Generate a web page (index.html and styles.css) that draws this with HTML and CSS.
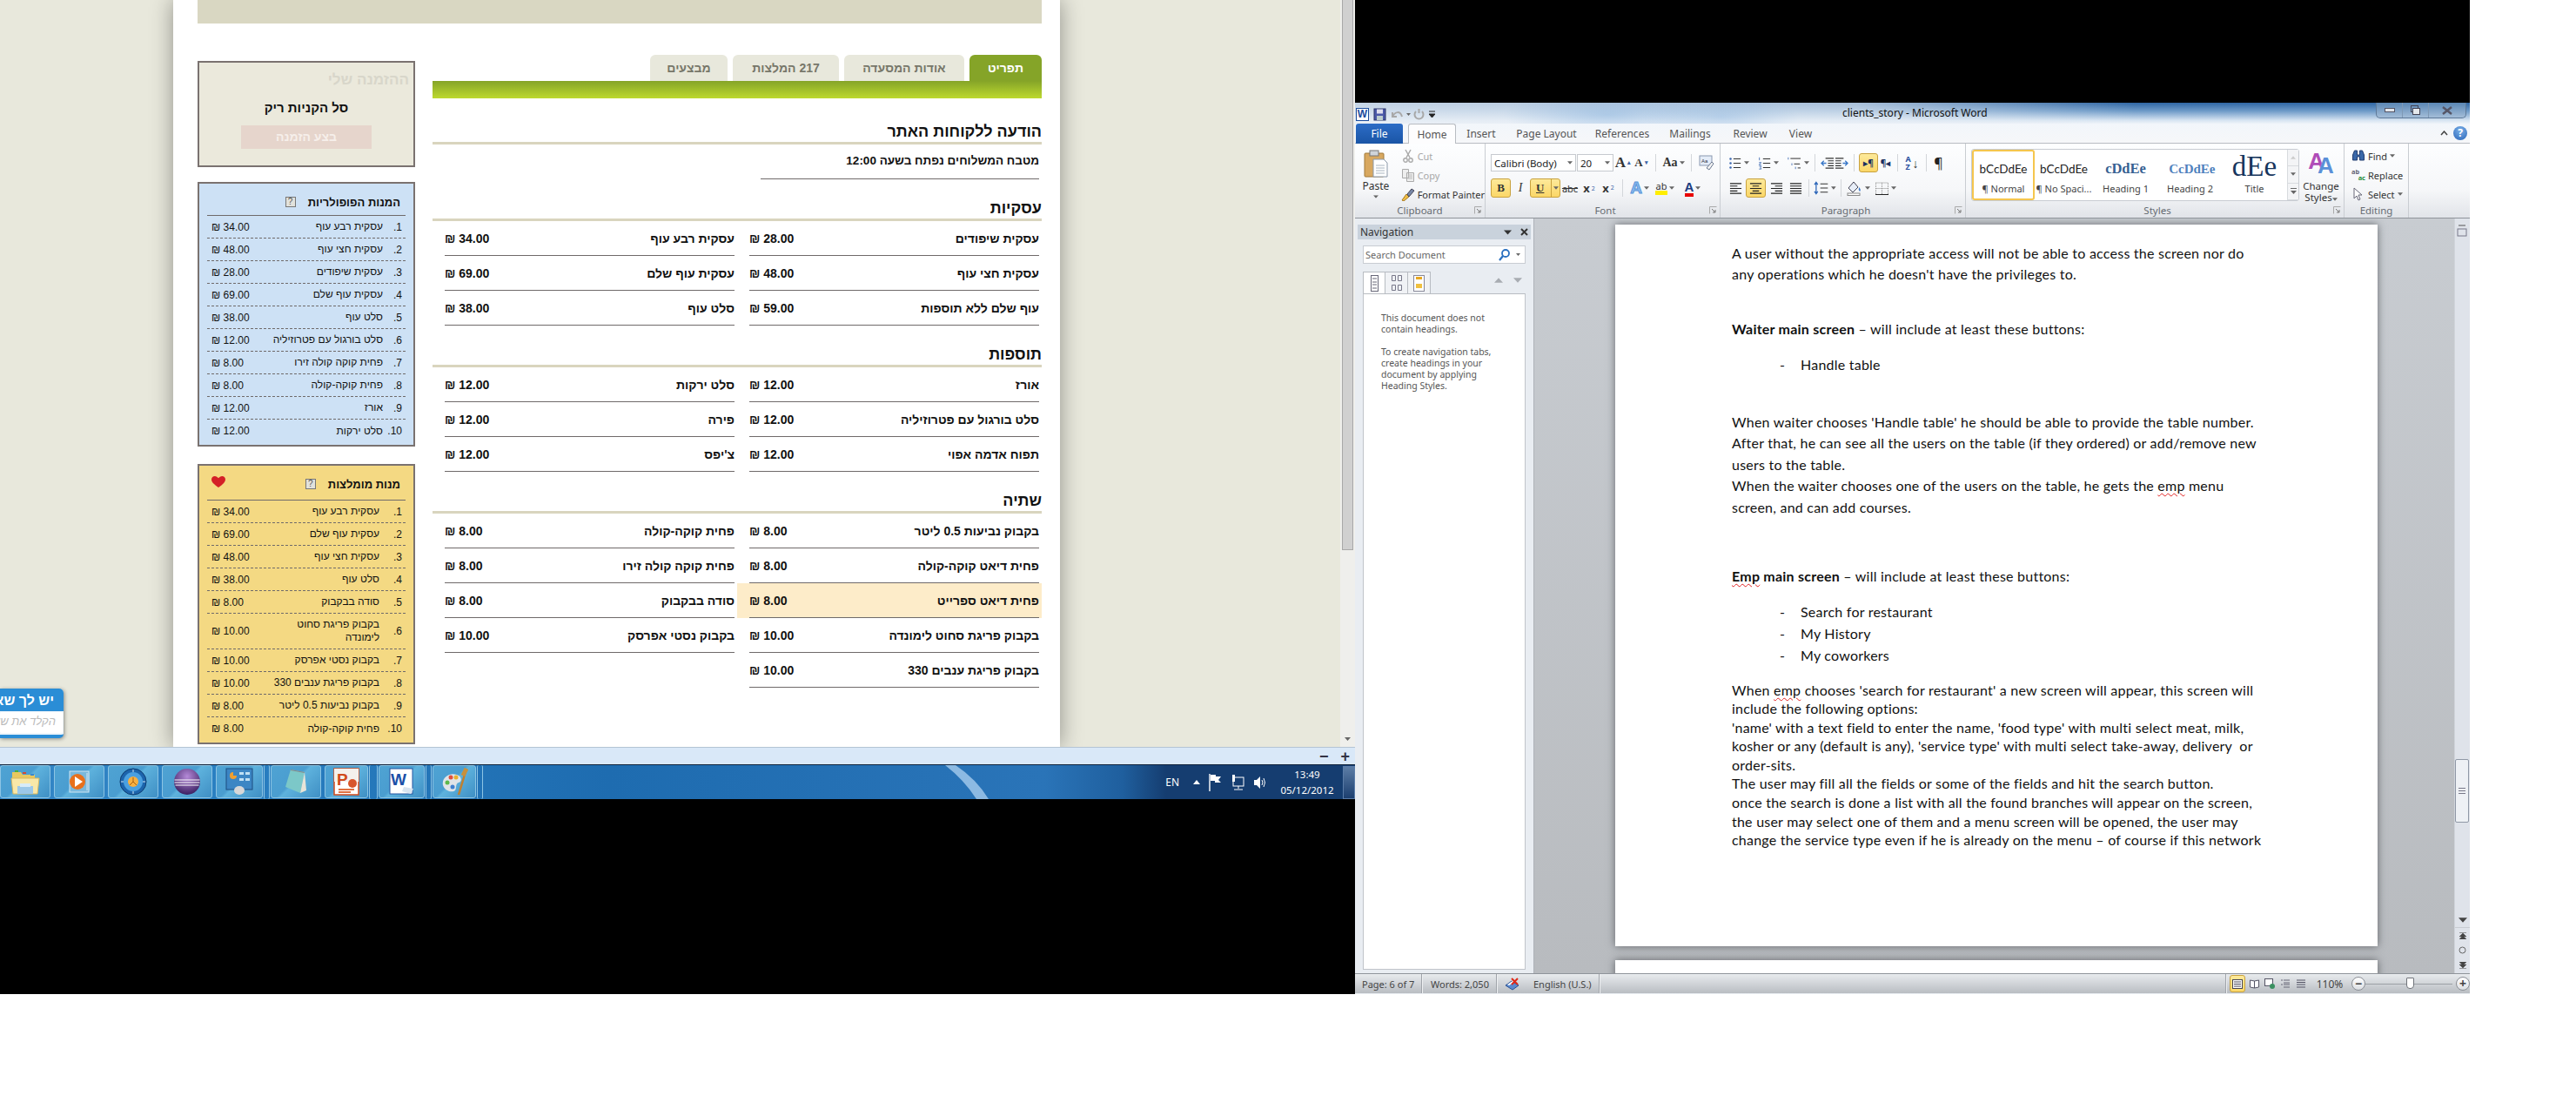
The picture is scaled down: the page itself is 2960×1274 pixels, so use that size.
FILE: index.html
```html
<!DOCTYPE html>
<html lang="en">
<head>
  <meta charset="UTF-8">
  <title>clients_story - Microsoft Word</title>
  <link rel="stylesheet" href="styles.css">
</head>
<body>
  <svg class="icon-defs" width="0" height="0">
    <defs>
      <symbol id="i-bullets" viewBox="0 0 18 18"><g fill="#3a66b0"><circle cx="3" cy="3" r="1.5"/><circle cx="3" cy="9" r="1.5"/><circle cx="3" cy="15" r="1.5"/></g><path d="M7 3h10M7 9h10M7 15h10" stroke="#333" stroke-width="1.2"/></symbol>
      <symbol id="i-numbers" viewBox="0 0 18 18"><path d="M2 1v4M1.500 8h3l-3 3h3M1.500 13h3l-1 2 1 2h-3" stroke="#3a66b0" fill="none"/><path d="M7 3h10M7 9h10M7 15h10" stroke="#333" stroke-width="1.2"/></symbol>
      <symbol id="i-multi" viewBox="0 0 20 18"><path d="M2 1v3M7 9v3M12 14v3" stroke="#3a66b0"/><path d="M5 2.500h14M10 10h8M15 15.500h4" stroke="#333" stroke-width="1.2"/></symbol>
      <symbol id="i-dedent" viewBox="0 0 16 16"><path d="M6 2h10M9 5h7M9 8h7M9 11h7M6 14h10" stroke="#333" stroke-width="1.2"/><path d="M7 8H1m3-3L1 8l3 3" stroke="#3a78c8" stroke-width="1.4" fill="none"/></symbol>
      <symbol id="i-indent" viewBox="0 0 16 16"><path d="M0 2h10M0 5h7M0 8h7M0 11h7M0 14h10" stroke="#333" stroke-width="1.2"/><path d="M9 8h6m-3-3 3 3-3 3" stroke="#3a78c8" stroke-width="1.4" fill="none"/></symbol>
      <symbol id="i-left" viewBox="0 0 16 16"><path d="M1 2h14M1 5h9M1 8h14M1 11h9M1 14h14" stroke="#222" stroke-width="1.200"/></symbol>
      <symbol id="i-center" viewBox="0 0 16 16"><path d="M1 2h14M4 5h8M1 8h14M4 11h8M1 14h14" stroke="#222" stroke-width="1.200"/></symbol>
      <symbol id="i-right" viewBox="0 0 16 16"><path d="M1 2h14M6 5h9M1 8h14M6 11h9M1 14h14" stroke="#222" stroke-width="1.200"/></symbol>
      <symbol id="i-justify" viewBox="0 0 16 16"><path d="M1 2h14M1 5h14M1 8h14M1 11h14M1 14h14" stroke="#222" stroke-width="1.200"/></symbol>
      <symbol id="i-arrow" viewBox="0 0 7 4"><path d="M0 0h7L3.500 4z" fill="#666"/></symbol>
      <symbol id="i-launcher" viewBox="0 0 9 9"><path d="M.5 8.500v-8h8" stroke="#aaa" fill="none"/><path d="M3 3l4 4M7 4v3H4" stroke="#777" fill="none"/></symbol>
    </defs>
  </svg>

  <div class="screen">
    <section class="browser">
      <div class="viewport">
        <div class="site">
          <div class="site-page" dir="rtl" lang="he">
            <div class="site-header"></div>
            <div class="site-body">
              <main class="menu">
                <nav class="tabs">
                  <a class="tab tab-active">תפריט</a>
                  <a class="tab tab-about">אודות המסעדה</a>
                  <a class="tab tab-reviews">217 המלצות</a>
                  <a class="tab tab-deals">מבצעים</a>
                </nav>
                <div class="tabs-bar"></div>

                <h2 class="menu-title menu-title-first">הודעה ללקוחות האתר</h2>
                <p class="notice">מטבח המשלוחים נפתח בשעה 12:00</p>

                <h2 class="menu-title">עסקיות</h2>
                <div class="dishes">
                  <div class="dish"><div class="dish-line"><span>עסקית שיפודים</span><b>28.00 ₪</b></div></div>
                  <div class="dish"><div class="dish-line"><span>עסקית רבע עוף</span><b>34.00 ₪</b></div></div>
                  <div class="dish"><div class="dish-line"><span>עסקית חצי עוף</span><b>48.00 ₪</b></div></div>
                  <div class="dish"><div class="dish-line"><span>עסקית עוף שלם</span><b>69.00 ₪</b></div></div>
                  <div class="dish"><div class="dish-line"><span>עוף שלם ללא תוספות</span><b>59.00 ₪</b></div></div>
                  <div class="dish"><div class="dish-line"><span>סלט עוף</span><b>38.00 ₪</b></div></div>
                </div>

                <h2 class="menu-title">תוספות</h2>
                <div class="dishes">
                  <div class="dish"><div class="dish-line"><span>אורז</span><b>12.00 ₪</b></div></div>
                  <div class="dish"><div class="dish-line"><span>סלט ירקות</span><b>12.00 ₪</b></div></div>
                  <div class="dish"><div class="dish-line"><span>סלט בורגול עם פטרוזיליה</span><b>12.00 ₪</b></div></div>
                  <div class="dish"><div class="dish-line"><span>פירה</span><b>12.00 ₪</b></div></div>
                  <div class="dish"><div class="dish-line"><span>תפוח אדמה אפוי</span><b>12.00 ₪</b></div></div>
                  <div class="dish"><div class="dish-line"><span>צ'יפס</span><b>12.00 ₪</b></div></div>
                </div>

                <h2 class="menu-title">שתיה</h2>
                <div class="dishes">
                  <div class="dish"><div class="dish-line"><span>בקבוק נביעות 0.5 ליטר</span><b>8.00 ₪</b></div></div>
                  <div class="dish"><div class="dish-line"><span>פחית קוקה-קולה</span><b>8.00 ₪</b></div></div>
                  <div class="dish"><div class="dish-line"><span>פחית דיאט קוקה-קולה</span><b>8.00 ₪</b></div></div>
                  <div class="dish"><div class="dish-line"><span>פחית קוקה קולה זירו</span><b>8.00 ₪</b></div></div>
                  <div class="dish dish-hover"><div class="dish-line"><span>פחית דיאט ספרייט</span><b>8.00 ₪</b></div></div>
                  <div class="dish"><div class="dish-line"><span>סודה בבקבוק</span><b>8.00 ₪</b></div></div>
                  <div class="dish"><div class="dish-line"><span>בקבוק פריגת סחוט לימונדה</span><b>10.00 ₪</b></div></div>
                  <div class="dish"><div class="dish-line"><span>בקבוק נסטי אפרסק</span><b>10.00 ₪</b></div></div>
                  <div class="dish"><div class="dish-line"><span>בקבוק פריגת ענבים 330</span><b>10.00 ₪</b></div></div>
                </div>
              </main>

              <aside class="side">
                <div class="cart">
                  <div class="cart-title">ההזמנה שלי</div>
                  <div class="cart-empty">סל הקניות ריק</div>
                  <div class="cart-button">בצע הזמנה</div>
                </div>

                <div class="box box-popular">
                  <div class="box-title"><span>המנות הפופולריות</span><i class="help">?</i></div>
                  <ol class="rank">
                    <li><span class="num">1.</span><span class="name">עסקית רבע עוף</span><span class="price">34.00 ₪</span></li>
                    <li><span class="num">2.</span><span class="name">עסקית חצי עוף</span><span class="price">48.00 ₪</span></li>
                    <li><span class="num">3.</span><span class="name">עסקית שיפודים</span><span class="price">28.00 ₪</span></li>
                    <li><span class="num">4.</span><span class="name">עסקית עוף שלם</span><span class="price">69.00 ₪</span></li>
                    <li><span class="num">5.</span><span class="name">סלט עוף</span><span class="price">38.00 ₪</span></li>
                    <li><span class="num">6.</span><span class="name">סלט בורגול עם פטרוזיליה</span><span class="price">12.00 ₪</span></li>
                    <li><span class="num">7.</span><span class="name">פחית קוקה קולה זירו</span><span class="price">8.00 ₪</span></li>
                    <li><span class="num">8.</span><span class="name">פחית קוקה-קולה</span><span class="price">8.00 ₪</span></li>
                    <li><span class="num">9.</span><span class="name">אורז</span><span class="price">12.00 ₪</span></li>
                    <li><span class="num">10.</span><span class="name">סלט ירקות</span><span class="price">12.00 ₪</span></li>
                  </ol>
                </div>

                <div class="box box-liked">
                  <div class="box-title"><span>מנות מומלצות</span><i class="help">?</i>
                    <svg class="heart" viewBox="0 0 16 13"><path d="M8 13C3 9.500 0 7 0 3.800 0 1.500 1.800 0 3.800 0 5.500 0 7 1 8 2.300 9 1 10.500 0 12.200 0 14.200 0 16 1.500 16 3.800 16 7 13 9.500 8 13z" fill="#d42027"/></svg>
                  </div>
                  <ol class="rank">
                    <li><span class="num">1.</span><span class="name">עסקית רבע עוף</span><span class="price">34.00 ₪</span></li>
                    <li><span class="num">2.</span><span class="name">עסקית עוף שלם</span><span class="price">69.00 ₪</span></li>
                    <li><span class="num">3.</span><span class="name">עסקית חצי עוף</span><span class="price">48.00 ₪</span></li>
                    <li><span class="num">4.</span><span class="name">סלט עוף</span><span class="price">38.00 ₪</span></li>
                    <li><span class="num">5.</span><span class="name">סודה בבקבוק</span><span class="price">8.00 ₪</span></li>
                    <li class="rank-tall"><span class="num">6.</span><span class="name">בקבוק פריגת סחוט לימונדה</span><span class="price">10.00 ₪</span></li>
                    <li><span class="num">7.</span><span class="name">בקבוק נסטי אפרסק</span><span class="price">10.00 ₪</span></li>
                    <li><span class="num">8.</span><span class="name">בקבוק פריגת ענבים 330</span><span class="price">10.00 ₪</span></li>
                    <li><span class="num">9.</span><span class="name">בקבוק נביעות 0.5 ליטר</span><span class="price">8.00 ₪</span></li>
                    <li><span class="num">10.</span><span class="name">פחית קוקה-קולה</span><span class="price">8.00 ₪</span></li>
                  </ol>
                </div>
              </aside>
            </div>
          </div>
        </div>
        <div class="page-scroll">
          <div class="page-thumb"></div>
          <svg class="page-down" viewBox="0 0 7 4"><use href="#i-arrow"/></svg>
        </div>

        <div class="chat" dir="rtl" lang="he">
          <div class="chat-head">יש לך שאלה?</div>
          <div class="chat-input">הקלד את שאלתך</div>
        </div>
      </div>

      <div class="zoombar"><span>−</span><span>+</span></div>

      <footer class="taskbar">
        <svg class="task-streak" viewBox="0 0 1557 39" width="1557" height="39"><path d="M1086 0h12q24 16 38 39h-14q-14-22-36-39z" fill="#b8d8f5" opacity=".7"/></svg>

        <a class="task"><svg width="34" height="30" viewBox="0 0 34 30"><path d="M2 4h10l2 3h14v5H2z" fill="#e8c860"/><path d="M1 11h32l-2 18H3z" fill="#f8e8a8" stroke="#d8b860"/><path d="M8 20h18v9H8z" fill="#9cc8e8"/><path d="M11 17h12v4H11z" fill="#d8ecf8"/><rect x="5" y="2" width="4" height="2" fill="#4cae3c"/><rect x="14" y="4" width="4" height="2" fill="#d84a30"/><rect x="23" y="6" width="4" height="2" fill="#3a88d0"/></svg></a>
        <a class="task"><svg width="34" height="30" viewBox="0 0 34 30"><rect x="6" y="3" width="22" height="24" fill="#7ab8dc" stroke="#cfe6f4"/><rect x="25" y="5" width="4" height="20" fill="#a8d0e8"/><circle cx="15" cy="15" r="9" fill="#e8701c"/><path d="M12 9l9 6-9 6z" fill="#fff"/></svg></a>
        <a class="task"><svg width="34" height="32" viewBox="0 0 32 32"><circle cx="16" cy="16" r="15" fill="#1c64ac" stroke="#0e3c70"/><circle cx="16" cy="16" r="11" fill="#4aa0e0"/><circle cx="16" cy="16" r="6" fill="#f8b040"/><path d="M16 11v5l-4 4m4-4 4 4" stroke="#a86010" fill="none"/><path d="M16 2v3M16 27v3M2 16h3M27 16h3" stroke="#cfe8f8"/></svg></a>
        <a class="task"><svg width="34" height="32" viewBox="0 0 32 32"><defs><radialGradient id="ecl" cx=".5" cy=".3" r=".8"><stop offset="0" stop-color="#b58ad8"/><stop offset="1" stop-color="#2a1050"/></radialGradient></defs><circle cx="16" cy="16" r="15" fill="url(#ecl)"/><path d="M1.500 14h29M1.500 17h29M2.500 20h27" stroke="#fff" stroke-width="1.200"/></svg></a>
        <a class="task task-short"><svg width="34" height="32" viewBox="0 0 32 32"><rect x="1" y="1" width="30" height="24" fill="#3c86c4" stroke="#1c4c80"/><path d="M9 5a4 4 0 1 0 4 4H9z" fill="#f0a030"/><rect x="16" y="5" width="5" height="3" fill="#bfe0f4"/><rect x="23" y="5" width="5" height="3" fill="#bfe0f4"/><rect x="16" y="12" width="5" height="3" fill="#bfe0f4"/><rect x="23" y="12" width="5" height="3" fill="#bfe0f4"/><ellipse cx="16" cy="26" rx="6" ry="5" fill="#d8d8d8"/></svg></a>
        <i class="task-gap"></i>
        <a class="task"><svg width="34" height="32" viewBox="0 0 32 32"><path d="M10 2l16 3-5 24-17-7z" fill="#7cc8c8"/><path d="M10 2l16 3v1L10 3z" fill="#888"/><path d="M26 5l2 21-7 3z" fill="#e8e4d8"/></svg></a>
        <a class="task task-mid"><svg width="30" height="32" viewBox="0 0 30 32"><rect x="1" y="1" width="28" height="30" fill="#fff" stroke="#d04a1c" stroke-width="1.500"/><rect x="1" y="1" width="28" height="15" fill="#f4f0ec"/><text x="4" y="20" class="svg-ppt">P</text><circle cx="22" cy="18" r="5" fill="#d8562c"/><path d="M6 25h18M6 28h14" stroke="#e07040" stroke-width="2"/></svg></a>
        <i class="task-gap task-gap-wide"></i>
        <a class="task task-mid task-word"><svg width="32" height="32" viewBox="0 0 32 32"><rect x="2" y="1" width="26" height="29" fill="#fff" stroke="#2454a0"/><text x="3" y="20" class="svg-word">W</text><path d="M18 22l11 2-3 6-10-3z" fill="#d8e4f0"/></svg></a>
        <i class="task-gap"></i>
        <a class="task task-mid"><svg width="32" height="32" viewBox="0 0 32 32"><path d="M3 20C1 11 11 5 19 8c6 2 6 8 2 9-4 1-2 6-4 9-3 3-12 1-14-6z" fill="#e0e4e8"/><circle cx="8" cy="17" r="2.500" fill="#5cb84c"/><circle cx="12" cy="11" r="2.500" fill="#e05040"/><circle cx="18" cy="11" r="2.500" fill="#e8b030"/><circle cx="14" cy="22" r="2.500" fill="#4080d0"/><path d="M30 1l-9 30" stroke="#c08030" stroke-width="2.500"/><path d="M30 1l-4 8" stroke="#c8903c" stroke-width="5"/></svg></a>
        <i class="task-gap"></i>

        <div class="tray">
          <span class="tray-lang">EN</span>
          <svg width="8" height="5" viewBox="0 0 8 5"><path d="M4 0l4 5H0z" fill="#fff"/></svg>
          <svg width="16" height="22" viewBox="0 0 16 22"><path d="M1 1v20" stroke="#fff" stroke-width="1.400"/><path d="M2 2h6v2h6l-3 4 3 3H7V9H2z" fill="#fff"/></svg>
          <svg width="15" height="20" viewBox="0 0 15 20"><rect x="1" y="1" width="3" height="8" fill="#fff"/><rect x="2" y="4" width="12" height="10" fill="none" stroke="#fff"/><path d="M8 14v3M3 18h10" stroke="#fff"/></svg>
          <svg width="15" height="18" viewBox="0 0 15 18"><path d="M1 6h3l4-4v14l-4-4H1z" fill="#fff"/><path d="M10 6q2 3 0 6M12 4q3 5 0 10" stroke="#fff" fill="none"/></svg>
          <div class="clock"><span>13:49</span><span>05/12/2012</span></div>
          <i class="show-desktop"></i>
        </div>
      </footer>
    </section>

    <section class="word">
      <header class="word-title">
        <div class="qat">
          <span class="qat-w">W</span>
          <svg width="15" height="15" viewBox="0 0 15 15"><rect x="1" y="1" width="13" height="13" fill="#4a58a8" stroke="#2a3468"/><rect x="4" y="1.500" width="7" height="5" fill="#dde"/><rect x="4" y="9" width="7" height="5" fill="#bcc"/></svg>
          <svg width="15" height="13" viewBox="0 0 15 13"><path d="M2 4v5h5M2 9c3-6 9-7 11 0" stroke="#a8a8a8" stroke-width="2" fill="none"/></svg>
          <svg class="qat-arrow" width="5" height="3" viewBox="0 0 7 4"><use href="#i-arrow"/></svg>
          <svg width="13" height="13" viewBox="0 0 13 13"><path d="M3 3a5 5 0 1 0 7 0M6.500 0v5" stroke="#a8a8a8" stroke-width="2" fill="none"/></svg>
          <svg width="7" height="9" viewBox="0 0 7 9"><path d="M0 1h7M0 4h7L3.500 8z" stroke="#222" fill="#222"/></svg>
        </div>
        <div class="word-caption">clients_story - Microsoft Word</div>
        <div class="win-buttons"><span>
          <svg width="12" height="5" viewBox="0 0 12 5"><rect x=".5" y=".5" width="11" height="4" fill="#e4e8ec" stroke="#556"/></svg></span><span>
          <svg width="11" height="11" viewBox="0 0 11 11"><rect x=".5" y=".5" width="8" height="7" fill="none" stroke="#445"/><rect x="2.500" y="3.500" width="8" height="7" fill="#e4e8ec" stroke="#445"/></svg></span><span>
          <svg width="12" height="10" viewBox="0 0 12 10"><path d="M1 1l10 8M11 1L1 9" stroke="#556" stroke-width="2.400"/></svg></span>
        </div>
      </header>

      <div class="word-tabs">
        <a class="file-tab">File</a>
        <a class="rtab rtab-home">Home</a>
        <a class="rtab rtab-insert">Insert</a>
        <a class="rtab rtab-layout">Page Layout</a>
        <a class="rtab rtab-refs">References</a>
        <a class="rtab rtab-mail">Mailings</a>
        <a class="rtab rtab-review">Review</a>
        <a class="rtab rtab-view">View</a>
        <span class="tabs-end">
          <svg width="9" height="6" viewBox="0 0 9 6"><path d="M1 5l3.500-4L8 5" stroke="#444" stroke-width="1.500" fill="none"/></svg>
          <span class="word-help">?</span>
        </span>
      </div>

      <div class="ribbon">
        <div class="rgroup rgroup-clip">
          <div class="rgroup-body clip-body">
            <div class="paste">
              <svg width="28" height="32" viewBox="0 0 28 32"><rect x="1" y="4" width="22" height="27" rx="1" fill="#d8a860" stroke="#a07838"/><rect x="7" y="1" width="10" height="6" fill="#cfd4da" stroke="#777"/><path d="M11 11h12l4 4v16H11z" fill="#fff" stroke="#8a98a8"/><path d="M14 18h10M14 21h10M14 24h10M14 27h10" stroke="#a8b4c0"/></svg>
              <span>Paste</span>
              <svg width="6" height="4" viewBox="0 0 7 4"><use href="#i-arrow"/></svg>
            </div>
            <div class="clip-list">
              <div class="clip-row clip-off"><svg width="12" height="16" viewBox="0 0 12 16"><path d="M3 1l5 9M9 1L4 10" stroke="#aaa" stroke-width="1.500"/><circle cx="3" cy="13" r="2.200" fill="none" stroke="#aaa" stroke-width="1.400"/><circle cx="9" cy="13" r="2.200" fill="none" stroke="#aaa" stroke-width="1.400"/></svg><span>Cut</span></div>
              <div class="clip-row clip-off"><svg width="14" height="15" viewBox="0 0 14 15"><path d="M.5.500h7v10h-7zM5.500 4.500h8v10h-8z" fill="#eee" stroke="#aaa"/><path d="M7 7h5M7 9h5M7 11h5" stroke="#bbb"/></svg><span>Copy</span></div>
              <div class="clip-row"><svg width="16" height="16" viewBox="0 0 16 16"><path d="M1 15l5-7 3 3-6 5z" fill="#f0c048" stroke="#a87820"/><path d="M7 8l5-6 3 2-6 7z" fill="#7888a8" stroke="#445"/></svg><span>Format Painter</span></div>
            </div>
          </div>
          <div class="rgroup-label">Clipboard<svg class="launch" width="9" height="9"><use href="#i-launcher"/></svg></div>
        </div>

        <div class="rgroup rgroup-font">
          <div class="rgroup-body tool-rows">
            <div class="tool-row">
              <span class="combo combo-family">Calibri (Body)<svg width="6" height="4"><use href="#i-arrow"/></svg></span>
              <span class="combo combo-size">20<svg width="6" height="4"><use href="#i-arrow"/></svg></span>
              <span class="tool w20 grow">A<sup>▴</sup></span>
              <span class="tool w22 shrink">A<sup>▾</sup></span>
              <i class="tool-sep"></i>
              <span class="tool w30 change-case">Aa<svg width="6" height="4"><use href="#i-arrow"/></svg></span>
              <i class="tool-sep"></i>
              <span class="tool w24"><svg width="18" height="18" viewBox="0 0 18 18"><rect x="1" y="1" width="14" height="11" fill="#e4ecf8" stroke="#8a98b0"/><text x="3" y="9" class="svg-tiny">Aa</text><path d="M9 15l6-7 2 2-5 7z" fill="#f4f4f4" stroke="#6a7890"/></svg></span>
            </div>
            <div class="tool-row">
              <span class="tool w23 on bold">B</span>
              <span class="tool w22 italic">I</span>
              <span class="tool w35 on underline"><span>U</span><i class="split"></i><svg width="6" height="4"><use href="#i-arrow"/></svg></span>
              <span class="tool w22 strike">abc</span>
              <span class="tool w22 script">x<sub>2</sub></span>
              <span class="tool w22 script">x<sup>2</sup></span>
              <i class="tool-sep"></i>
              <span class="tool w28 effect">A<svg width="6" height="4"><use href="#i-arrow"/></svg></span>
              <span class="tool w30"><span class="mark">ab</span><svg width="6" height="4"><use href="#i-arrow"/></svg></span>
              <span class="tool w34 font-color"><span class="color-a">A</span><svg width="6" height="4"><use href="#i-arrow"/></svg></span>
            </div>
          </div>
          <div class="rgroup-label">Font<svg class="launch" width="9" height="9"><use href="#i-launcher"/></svg></div>
        </div>

        <div class="rgroup rgroup-para">
          <div class="rgroup-body tool-rows">
            <div class="tool-row">
              <span class="tool w28"><svg width="15" height="15"><use href="#i-bullets"/></svg><svg class="ar" width="6" height="4"><use href="#i-arrow"/></svg></span>
              <span class="tool w28 ml6"><svg width="15" height="15"><use href="#i-numbers"/></svg><svg class="ar" width="6" height="4"><use href="#i-arrow"/></svg></span>
              <span class="tool w28 ml6"><svg width="17" height="15"><use href="#i-multi"/></svg><svg class="ar" width="6" height="4"><use href="#i-arrow"/></svg></span>
              <i class="tool-sep"></i>
              <span class="tool w17"><svg width="15" height="15"><use href="#i-dedent"/></svg></span>
              <span class="tool w17"><svg width="15" height="15"><use href="#i-indent"/></svg></span>
              <i class="tool-sep"></i>
              <span class="tool w22 on para-mark">▸¶</span>
              <span class="tool w17 para-mark">¶◂</span>
              <i class="tool-sep"></i>
              <span class="tool w22 sort"><span>A<br>Z</span>↓</span>
              <i class="tool-sep"></i>
              <span class="tool w17 pilcrow">¶</span>
            </div>
            <div class="tool-row">
              <span class="tool w20"><svg width="15" height="15"><use href="#i-left"/></svg></span>
              <span class="tool w23 on ml2"><svg width="15" height="15"><use href="#i-center"/></svg></span>
              <span class="tool w20 ml2"><svg width="15" height="15"><use href="#i-right"/></svg></span>
              <span class="tool w20 ml2"><svg width="15" height="15"><use href="#i-justify"/></svg></span>
              <i class="tool-sep"></i>
              <span class="tool w26"><svg width="18" height="16" viewBox="0 0 18 16"><path d="M3 1v14M1 4l2-3 2 3M1 12l2 3 2-3" stroke="#2a64b8" fill="none" stroke-width="1.300"/><path d="M8 3h9M8 8h9M8 13h9" stroke="#333" stroke-width="1.200"/></svg><svg class="ar" width="6" height="4"><use href="#i-arrow"/></svg></span>
              <i class="tool-sep"></i>
              <span class="tool w28"><svg width="18" height="18" viewBox="0 0 18 18"><path d="M2 9l6-7 5 6-6 6z" fill="#e8eef8" stroke="#445"/><path d="M14 8q3 3 1 5-2-2-1-5z" fill="#3a78c8"/><rect x="1" y="15" width="14" height="2.500" fill="#fff" stroke="#888"/></svg><svg class="ar" width="6" height="4"><use href="#i-arrow"/></svg></span>
              <span class="tool w28 ml4"><svg width="15" height="15" viewBox="0 0 15 15"><path d="M.5 1h14M.5 7.500h14M7.500 1v14M.5 1v14M14.500 1v14" stroke="#888" stroke-dasharray="1 1"/><path d="M0 14.500h15" stroke="#222"/></svg><svg class="ar" width="6" height="4"><use href="#i-arrow"/></svg></span>
            </div>
          </div>
          <div class="rgroup-label">Paragraph<svg class="launch" width="9" height="9"><use href="#i-launcher"/></svg></div>
        </div>

        <div class="rgroup rgroup-styles">
          <div class="rgroup-body styles-body">
            <div class="gallery">
              <div class="gstyle gstyle-normal gstyle-on"><span class="gs-sample">bCcDdEe</span><span class="gs-name">¶ Normal</span></div>
              <div class="gstyle gstyle-nospace"><span class="gs-sample">bCcDdEe</span><span class="gs-name">¶ No Spaci...</span></div>
              <div class="gstyle gstyle-h1"><span class="gs-sample gs-h1">cDdEe</span><span class="gs-name">Heading 1</span></div>
              <div class="gstyle gstyle-h2"><span class="gs-sample gs-h2">CcDdEe</span><span class="gs-name">Heading 2</span></div>
              <div class="gstyle gstyle-title"><span class="gs-sample gs-title">dEe</span><span class="gs-name">Title</span></div>
              <div class="gallery-scroll">
                <span><svg width="6" height="4" viewBox="0 0 7 4"><path d="M0 4h7L3.500 0z" fill="#ccc"/></svg></span>
                <span><svg width="6" height="4"><use href="#i-arrow"/></svg></span>
                <span><svg width="7" height="7" viewBox="0 0 7 7"><path d="M0 0h7v1H0zM0 3h7L3.500 7z" fill="#666"/></svg></span>
              </div>
            </div>
            <div class="change-styles">
              <div class="cs-letters"><span class="cs-a">A</span><span class="cs-b">A</span></div>
              <span>Change</span>
              <span>Styles<svg width="6" height="4"><use href="#i-arrow"/></svg></span>
            </div>
          </div>
          <div class="rgroup-label">Styles<svg class="launch" width="9" height="9"><use href="#i-launcher"/></svg></div>
        </div>

        <div class="rgroup rgroup-edit">
          <div class="rgroup-body clip-list edit-list">
            <div class="clip-row"><svg width="15" height="14" viewBox="0 0 15 14"><path d="M1 6l2-5h3v5h3V1h3l2 5v6H9V8H6v4H1z" fill="#3a68a8" stroke="#243f70"/></svg><span>Find</span><svg width="6" height="4"><use href="#i-arrow"/></svg></div>
            <div class="clip-row"><span class="replace-ic"><b>ab</b><b class="ac">ac</b></span><span>Replace</span></div>
            <div class="clip-row"><svg width="14" height="16" viewBox="0 0 14 16"><path d="M2 1v12l3-3 2 5 2-1-2-5h4z" fill="#fff" stroke="#667"/></svg><span>Select</span><svg width="6" height="4"><use href="#i-arrow"/></svg></div>
          </div>
          <div class="rgroup-label">Editing</div>
        </div>
      </div>

      <div class="word-main">
        <aside class="nav-pane">
          <div class="nav-head"><span>Navigation</span><svg width="9" height="6" viewBox="0 0 7 4"><path d="M0 0h7L3.500 4z" fill="#333"/></svg><svg width="9" height="9" viewBox="0 0 9 9"><path d="M1 1l7 7M8 1L1 8" stroke="#333" stroke-width="2"/></svg></div>
          <div class="nav-search"><span>Search Document</span>
            <svg width="13" height="14" viewBox="0 0 13 14"><circle cx="8" cy="5" r="4" fill="#fff" stroke="#2a70c0" stroke-width="1.800"/><path d="M5 8l-4 5" stroke="#2a70c0" stroke-width="2.200"/></svg>
            <svg width="5" height="3"><use href="#i-arrow"/></svg>
          </div>
          <div class="nav-tabs">
            <span class="nav-tab nav-tab-on"><svg width="9" height="19" viewBox="0 0 9 19"><rect x=".5" y=".5" width="8" height="18" fill="#fff" stroke="#667"/><path d="M2 4h5M2 8h5M2 11h5M2 15h5" stroke="#667"/></svg></span>
            <span class="nav-tab"><svg width="12" height="18" viewBox="0 0 12 18"><path d="M.5.500h4v6h-4zM7.500.500h4v6h-4zM.5 11.500h4v6h-4zM7.500 11.500h4v6h-4z" fill="none" stroke="#778"/></svg></span>
            <span class="nav-tab"><svg width="13" height="19" viewBox="0 0 13 19"><rect x=".5" y=".5" width="12" height="18" fill="#fff" stroke="#889"/><rect x="3" y="2" width="7" height="3" fill="#e8a820"/><rect x="3" y="10" width="7" height="5" fill="#f0c040"/></svg></span>
            <svg class="nav-up" width="10" height="6" viewBox="0 0 7 4"><path d="M0 4h7L3.500 0z" fill="#a8acb2"/></svg>
            <svg class="nav-down" width="10" height="6" viewBox="0 0 7 4"><path d="M0 0h7L3.500 4z" fill="#a8acb2"/></svg>
          </div>
          <div class="nav-body">
            <p>This document does not<br>contain headings.</p>
            <p>To create navigation tabs,<br>create headings in your<br>document by applying<br>Heading Styles.</p>
          </div>
        </aside>

        <div class="doc-area">
          <article class="doc-page">
            <p class="doc-p doc-first">A user without the appropriate access will not be able to access the screen nor do<br>any operations which he doesn't have the privileges to.</p>
            <p class="doc-p doc-waiter"><strong>Waiter main screen</strong> – will include at least these buttons:</p>
            <ul class="doc-list doc-handle"><li>Handle table</li></ul>
            <p class="doc-p doc-when">When waiter chooses 'Handle table' he should be able to provide the table number.<br>After that, he can see all the users on the table (if they ordered) or add/remove new<br>users to the table.<br>When the waiter chooses one of the users on the table, he gets the <u>emp</u> menu<br>screen, and can add courses.</p>
            <p class="doc-p doc-emp"><strong><u>Emp</u> main screen</strong> – will include at least these buttons:</p>
            <ul class="doc-list doc-emp-list"><li>Search for restaurant</li><li>My History</li><li>My coworkers</li></ul>
            <p class="doc-p doc-search">When <u>emp</u> chooses 'search for restaurant' a new screen will appear, this screen will<br>include the following options:<br>'name' with a text field to enter the name, 'food type' with multi select meat, milk,<br>kosher or any (default is any), 'service type' with multi select take-away, delivery&nbsp; or<br>order-sits.<br>The user may fill all the fields or some of the fields and hit the search button.<br>once the search is done a list with all the found branches will appear on the screen,<br>the user may select one of them and a menu screen will be opened, the user may<br>change the service type even if he is already on the menu – of course if this network</p>
          </article>
          <div class="doc-page doc-next"></div>
        </div>

        <div class="doc-scroll">
          <svg class="ruler-ic" width="12" height="14" viewBox="0 0 12 14"><path d="M2 1h8" stroke="#555"/><rect x="1" y="5" width="10" height="8" fill="none" stroke="#778"/></svg>
          <div class="doc-thumb"><svg width="8" height="7" viewBox="0 0 8 7"><path d="M0 .5h8M0 3.500h8M0 6.500h8" stroke="#778"/></svg></div>
          <div class="doc-scroll-nav">
            <span><svg width="10" height="6" viewBox="0 0 7 4"><path d="M0 0h7L3.500 4z" fill="#444"/></svg></span>
            <span><svg width="8" height="8" viewBox="0 0 8 8"><path d="M0 .5h8M4 1l4 4H0zM4 4l4 4H0z" fill="#444" stroke="#444" stroke-width=".5"/></svg></span>
            <span><svg width="9" height="9" viewBox="0 0 9 9"><circle cx="4.500" cy="4.500" r="3.500" fill="none" stroke="#666"/></svg></span>
            <span><svg width="8" height="8" viewBox="0 0 8 8"><path d="M0 7.500h8M4 7L0 3h8zM4 4L0 0h8z" fill="#444" stroke="#444" stroke-width=".5"/></svg></span>
          </div>
        </div>
      </div>

      <footer class="word-status">
        <span class="st-cell st-page">Page: 6 of 7</span>
        <span class="st-cell st-words">Words: 2,050</span>
        <span class="st-cell st-lang">
          <svg width="17" height="15" viewBox="0 0 17 15"><path d="M1 9l7-5 8 5-7 5z" fill="#5a8ad0" stroke="#2a5090"/><path d="M3 8l6-4 2 1-6 4z" fill="#fff"/><path d="M8 1l7 7M15 1L8 8" stroke="#e02818" stroke-width="2"/></svg>
          <span>English (U.S.)</span>
        </span>
        <span class="st-views">
          <span class="view-btn view-on"><svg width="12" height="11" viewBox="0 0 12 11"><rect x=".5" y=".5" width="11" height="10" fill="#fff" stroke="#445"/><path d="M2 3h8M2 5.500h8M2 8h8" stroke="#445"/></svg></span>
          <span class="view-btn"><svg width="11" height="11" viewBox="0 0 11 11"><path d="M.5 1l5 1 5-1v8l-5 1-5-1zM5.500 2v8" fill="#fff" stroke="#556"/></svg></span>
          <span class="view-btn"><svg width="12" height="12" viewBox="0 0 12 12"><rect x=".5" y=".5" width="9" height="8" fill="#fff" stroke="#556"/><circle cx="9" cy="9" r="3" fill="#3a9060"/></svg></span>
          <span class="view-btn"><svg width="10" height="10" viewBox="0 0 10 10"><path d="M0 1h2M3 1h7M3 4h7M0 6h2M3 6h7M3 9h7" stroke="#667"/></svg></span>
          <span class="view-btn"><svg width="10" height="10" viewBox="0 0 10 10"><path d="M0 1h10M0 3.500h10M0 6h10M0 9h10" stroke="#556"/></svg></span>
        </span>
        <span class="st-zoom">110%</span>
        <span class="zoom-circle">−</span>
        <span class="slider"><i class="slider-knob"></i></span>
        <span class="zoom-circle">+</span>
      </footer>
    </section>
  </div>
</body>
</html>
```

FILE: styles.css
```css
* {
  box-sizing: border-box;
}

html,
body {
  margin: 0;
  padding: 0;
  background: #fff;
  overflow: hidden;
  font-family: 'Liberation Sans', Arial, sans-serif;
}

.icon-defs {
  position: absolute;
}

.screen {
  width: 2838px;
  height: 1142px;
  background: #000;
  display: flex;
  align-items: flex-start;
}

/* left screen: browser with the restaurant page */
.browser {
  width: 1557px;
  height: 918px;
  flex: none;
  display: flex;
  flex-direction: column;
}

.viewport {
  position: relative;
  height: 858px;
  display: flex;
  overflow: hidden;
  background: #e8e8dc;
}

.site {
  width: 1540px;
  padding-left: 199px;
  overflow: hidden;
}

.site-page {
  width: 1019px;
  height: 858px;
  padding: 0 21px 0 28px;
  background: #fff;
  box-shadow: 0 0 24px rgba(0, 0, 0, 0.38);
}

.site-header {
  height: 27px;
  background: #d9d7c2;
}

.site-body {
  display: flex;
  gap: 20px;
}

.menu {
  width: 700px;
  padding-top: 36px;
  flex: none;
}

.tabs {
  display: flex;
  gap: 6px;
}

.tab {
  width: 89px;
  height: 30px;
  border-radius: 6px 6px 0 0;
  background: #e8e8dc;
  color: #77776a;
  font-size: 14px;
  font-weight: bold;
  line-height: 30px;
  text-align: center;
}

.tab-active {
  width: 83px;
  background: #85a428;
  color: #fff;
}

.tab-about {
  width: 138px;
}

.tab-reviews {
  width: 122px;
}

.menu-title {
  height: 48px;
  margin: 0;
  display: flex;
  align-items: flex-end;
  border-bottom: 3px solid #d9d5be;
  color: #111;
  font-size: 18px;
  font-weight: bold;
  line-height: 24px;
}

.tabs-bar {
  height: 20px;
  background: linear-gradient(to bottom, #85a428, #bdd92f);
}

.menu-title-first {
  height: 53px;
}

.notice {
  width: 320px;
  height: 40px;
  margin: 0 3px 0 0;
  border-bottom: 1px solid #6f6a6a;
  color: #111;
  font-size: 13.5px;
  font-weight: bold;
  line-height: 38px;
}

.dishes {
  display: grid;
  grid-template-columns: 350px 350px;
}

.dish {
  padding: 0 3px 0 14px;
}

.dish-hover {
  background: #fdecc9;
}

.dish-line {
  height: 40px;
  display: flex;
  align-items: center;
  justify-content: space-between;
  border-bottom: 1px solid #6f6a6a;
  color: #111;
  font-size: 14px;
  font-weight: bold;
}

.dish-line b {
  font-size: 14px;
}

.side {
  width: 250px;
  margin-top: 43px;
  flex: none;
}

.cart {
  height: 122px;
  padding: 10px 5px 0;
  border: 2px solid #7a7270;
  background: #ebe9dc;
}

.cart-title {
  color: #d8d6ca;
  font-size: 17px;
  font-weight: bold;
  line-height: 20px;
}

.cart-empty {
  margin-top: 12px;
  color: #111;
  font-size: 15px;
  font-weight: bold;
  line-height: 20px;
  text-align: center;
}

.cart-button {
  width: 150px;
  height: 27px;
  margin: 10px auto 0;
  background: #e6d5cc;
  color: #f6efea;
  font-size: 14px;
  font-weight: bold;
  line-height: 27px;
  text-align: center;
}

.box {
  margin-top: 17px;
  padding: 0 9px 3px;
  border: 2px solid #7a7270;
  color: #111;
  font-size: 12px;
}

.box-popular {
  background: #cde1f5;
}

.box-liked {
  margin-top: 20px;
  background: #f4d983;
}

.box-title {
  height: 37px;
  padding: 0 6px 2px 0;
  display: flex;
  align-items: flex-end;
  gap: 14px;
  border-bottom: 1px solid #6f6a6a;
  font-size: 13px;
  font-weight: bold;
  line-height: 24px;
}

.box-liked .box-title {
  height: 40px;
  padding-bottom: 5px;
}

.help {
  width: 12px;
  height: 12px;
  margin-bottom: 7px;
  border: 1px solid #777;
  background: #e2e2dc;
  color: #555;
  font-size: 10px;
  font-style: normal;
  font-weight: normal;
  line-height: 10px;
  text-align: center;
}

.heart {
  width: 16px;
  height: 13px;
  margin: 0 auto 9px 5px;
}

.rank {
  margin: 0;
  padding: 0;
  list-style: none;
}

.rank li {
  height: 26px;
  padding: 0 4px 0 5px;
  display: flex;
  align-items: center;
  border-bottom: 1px dashed #6f6a6a;
}

.rank li:last-child {
  border-bottom: 0;
}

.rank .rank-tall {
  height: 41px;
}

.num {
  width: 22px;
  flex: none;
}

.box-liked .num {
  width: 26px;
}

.name {
  width: 125px;
  flex: none;
  line-height: 15px;
}

.box-popular .name {
  width: 124px;
  white-space: nowrap;
}

.box-liked .name {
  white-space: normal;
}

.price {
  margin-right: auto;
  white-space: nowrap;
}

.page-scroll {
  width: 17px;
  padding: 0 2px;
  position: relative;
  background: #efefec;
}

.page-thumb {
  height: 632px;
  border: 1px solid #a8a8a8;
  border-top: 0;
  background: #d0d0d0;
}

.page-down {
  position: absolute;
  left: 5px;
  bottom: 7px;
  width: 7px;
  height: 4px;
}

.chat {
  position: absolute;
  left: 0;
  top: 791px;
  width: 73px;
  height: 57px;
  border-radius: 0 5px 5px 0;
  background: #eef5fb;
  border-bottom: 4px solid #2a8dd6;
  box-shadow: 1px 1px 4px rgba(0, 0, 0, 0.4);
  overflow: hidden;
}

.chat-head {
  height: 26px;
  padding-right: 11px;
  background: #2a8dd6;
  color: #fff;
  font-size: 16px;
  font-weight: bold;
  line-height: 27px;
  white-space: nowrap;
}

.chat-input {
  height: 24px;
  margin: 1px 1px 0 0;
  padding-right: 8px;
  background: #fff;
  border-radius: 2px;
  color: #bbb;
  font-size: 13px;
  font-style: italic;
  line-height: 22px;
  white-space: nowrap;
}

.zoombar {
  height: 21px;
  padding-right: 6px;
  display: flex;
  justify-content: flex-end;
  align-items: center;
  gap: 14px;
  border-top: 1px solid #b4c4d4;
  border-bottom: 1px solid #10223a;
  background: #d9e8f8;
  color: #334;
  font-size: 18px;
  font-weight: bold;
  line-height: 18px;
}

.taskbar {
  position: relative;
  height: 39px;
  display: flex;
  background: linear-gradient(to right, #3486c6 0, #2a80c2 240px, #1e6cb0 700px, #2a74b8 1200px, #1f5f9e 1290px, #153d70 1340px);
}

.task-streak {
  position: absolute;
  left: 0;
  top: 0;
}

.task {
  position: relative;
  width: 58px;
  height: 38px;
  margin-right: 4px;
  display: flex;
  align-items: center;
  justify-content: center;
  border: 1px solid #8cc4e4;
  border-radius: 3px;
  background: linear-gradient(135deg, #4fa3d3, #4a9dd0 45%, #5eb2dd 50%, #3f8fc4);
}

.task-short {
  width: 54px;
  margin-right: 0;
}

.task-mid {
  width: 50px;
  margin-right: 0;
}

.task-word {
  width: 53px;
}

.task-gap {
  width: 7px;
  margin: 0 1px;
  border-left: 1px solid #8cc4e4;
  border-right: 1px solid #8cc4e4;
  border-radius: 2px;
}

.task-gap-wide {
  width: 10px;
}

.tray {
  position: relative;
  margin-left: auto;
  display: flex;
  align-items: center;
  gap: 10px;
  color: #fff;
  font-family: 'Noto Sans', sans-serif;
  font-size: 12px;
}

.tray-lang {
  margin-right: 6px;
}

.clock {
  width: 62px;
  margin-left: 6px;
  display: flex;
  flex-direction: column;
  align-items: center;
  gap: 3px;
  font-size: 11.5px;
  line-height: 15px;
}

.show-desktop {
  width: 14px;
  height: 38px;
  border: 1px solid #5a7ca8;
  background: linear-gradient(to bottom, #5c7da6, #1c3f70);
}

/* right screen: word window */
.word {
  width: 1281px;
  height: 1024px;
  margin-top: 118px;
  flex: none;
  display: flex;
  flex-direction: column;
  background: #e9edf2;
  font-family: 'Noto Sans', sans-serif;
  color: #3c3c3c;
  font-size: 11px;
}

.word-title {
  height: 24px;
  padding: 2px 4px 0 1px;
  display: flex;
  background:
    radial-gradient(ellipse 120px 26px at 290px 14px, rgba(120, 170, 220, 0.4), transparent),
    radial-gradient(ellipse 90px 24px at 420px 16px, rgba(120, 170, 220, 0.35), transparent),
    linear-gradient(to right, rgba(232, 238, 245, 0.8) 0, rgba(232, 238, 245, 0.65) 45%, rgba(232, 238, 245, 0) 70%),
    linear-gradient(to bottom, #2f66a3, #6f9bc8 40%, #d8e5f2 85%, #eef3f9);
}

.qat {
  width: 559px;
  display: flex;
  align-items: center;
  gap: 5px;
}

.qat-w {
  width: 15px;
  height: 15px;
  border: 1px solid #1c4c9c;
  background: #fff;
  color: #1c4c9c;
  font-family: 'Liberation Sans', sans-serif;
  font-size: 12px;
  font-weight: bold;
  line-height: 13px;
  text-align: center;
}

.qat-arrow {
  margin: 0 -2px;
}

.word-caption {
  color: #111;
  font-size: 12px;
  line-height: 20px;
}

.win-buttons {
  width: 104px;
  height: 18px;
  margin: -2px 0 0 auto;
  display: flex;
  border: 1px solid #5f7a99;
  border-top: 0;
  border-radius: 0 0 5px 5px;
  background: linear-gradient(to bottom, #5a86b4, #a3bdd8);
}

.win-buttons span {
  width: 30px;
  display: flex;
  align-items: center;
  justify-content: center;
  border-right: 1px solid #7f99b5;
}

.win-buttons span:last-child {
  flex: 1;
  border-right: 0;
}

.word-tabs {
  height: 23px;
  padding-left: 1px;
  display: flex;
  position: relative;
  border-bottom: 1px solid #b8bcc2;
  background: linear-gradient(to bottom, #f2f6fb, #f6f7f9);
  color: #555;
  font-size: 12px;
  line-height: 24px;
}

.file-tab {
  width: 54px;
  height: 23px;
  border-radius: 3px 3px 0 0;
  background: linear-gradient(to bottom, #2c6cc6, #1a55a6);
  color: #fff;
  text-align: center;
}

.rtab {
  text-align: center;
}

.rtab-home {
  width: 55px;
  height: 23px;
  margin-left: 6px;
  border: 1px solid #b8bcc2;
  border-bottom: 0;
  border-radius: 3px 3px 0 0;
  background: #fdfdfe;
}

.rtab-insert {
  width: 42px;
  margin-left: 8px;
}

.rtab-layout {
  width: 76px;
  margin-left: 16px;
}

.rtab-refs {
  width: 70px;
  margin-left: 14px;
}

.rtab-mail {
  width: 56px;
  margin-left: 15px;
}

.rtab-review {
  width: 42px;
  margin-left: 20px;
}

.rtab-view {
  width: 34px;
  margin-left: 20px;
}

.tabs-end {
  margin-left: auto;
  padding-right: 3px;
  display: flex;
  align-items: center;
  gap: 6px;
}

.word-help {
  width: 16px;
  height: 16px;
  border-radius: 50%;
  background: radial-gradient(circle at 50% 30%, #7ab0e8, #2a64b8);
  color: #fff;
  font-size: 12px;
  font-weight: bold;
  line-height: 16px;
  text-align: center;
}

.ribbon {
  height: 86px;
  display: flex;
  border-bottom: 1px solid #8f949a;
  background: linear-gradient(to bottom, #fdfeff, #f6f7f9 62%, #e1e4e9);
}

.rgroup {
  display: flex;
  flex-direction: column;
  border-right: 1px solid #c9cdd2;
  flex: none;
}

.rgroup-body {
  height: 68px;
}

.rgroup-label {
  height: 17px;
  position: relative;
  color: #666b72;
  font-size: 11.5px;
  line-height: 18px;
  text-align: center;
}

.launch {
  position: absolute;
  right: 3px;
  top: 4px;
}

.rgroup-clip {
  width: 150px;
}

.rgroup-font {
  width: 270px;
  padding-left: 6px;
}

.rgroup-para {
  width: 282px;
  padding-left: 7px;
}

.rgroup-styles {
  width: 435px;
  padding-left: 6px;
}

.rgroup-edit {
  width: 74px;
}

.clip-body {
  display: flex;
}

.paste {
  width: 48px;
  margin-left: 1px;
  padding-top: 7px;
  display: flex;
  flex-direction: column;
  align-items: center;
  color: #333;
  font-size: 12px;
}

.paste span {
  margin: 2px 0 3px;
  line-height: 15px;
}

.clip-list {
  padding-top: 3px;
  margin-left: 6px;
}

.clip-row {
  height: 22px;
  display: flex;
  align-items: center;
  gap: 3px;
  color: #333;
  font-size: 11px;
  white-space: nowrap;
}

.clip-row svg:first-child {
  width: 16px;
}

.clip-off {
  color: #a8a8a8;
}

.tool-rows {
  padding-top: 12px;
}

.tool-row {
  height: 22px;
  margin-bottom: 6px;
  display: flex;
  align-items: center;
}

.tool-rows .tool-row:first-child {
  height: 20px;
  margin-bottom: 8px;
}

.combo {
  height: 20px;
  padding-left: 3px;
  display: flex;
  align-items: center;
  justify-content: space-between;
  border: 1px solid #c6cacf;
  background: #fff;
  color: #222;
  font-size: 11.5px;
}

.combo svg {
  margin-right: 3px;
}

.combo-family {
  width: 98px;
  margin-right: 1px;
}

.combo-size {
  width: 42px;
}

.tool {
  height: 22px;
  display: flex;
  align-items: center;
  justify-content: center;
  gap: 2px;
  flex: none;
  color: #333;
  font-size: 13px;
}

.tool sup {
  font-size: 7px;
  color: #3a64a8;
  line-height: 0;
}

.w17 { width: 17px; }
.w20 { width: 20px; }
.w22 { width: 22px; }
.w23 { width: 23px; }
.w24 { width: 24px; }
.w26 { width: 26px; }
.w28 { width: 28px; }
.w30 { width: 30px; }
.w34 { width: 34px; }
.w35 { width: 35px; }
.ml2 { margin-left: 2px; }
.ml4 { margin-left: 4px; }
.ml6 { margin-left: 6px; }

.on {
  border: 1px solid #c9a23f;
  border-radius: 3px;
  background: linear-gradient(to bottom, #fde99a, #fbd768);
}

.tool-sep {
  width: 1px;
  height: 20px;
  margin: 0 5px;
  flex: none;
  background: #d3d6da;
}

.grow,
.shrink,
.bold,
.change-case {
  font-family: 'Liberation Serif', serif;
  font-weight: bold;
}

.grow {
  font-size: 17px;
  margin-left: 1px;
}

.shrink {
  font-size: 13px;
}

.change-case {
  font-size: 14px;
}

.italic {
  font-family: 'Liberation Serif', serif;
  font-style: italic;
  font-size: 14px;
}

.underline {
  font-family: 'Liberation Serif', serif;
  font-weight: bold;
  text-decoration: underline;
  justify-content: flex-start;
  padding-left: 6px;
}

.split {
  width: 1px;
  height: 20px;
  margin-left: 6px;
  background: #c9a23f;
}

.strike {
  text-decoration: line-through;
  font-size: 11px;
}

.script {
  font-weight: bold;
  font-size: 13px;
}

.script sub,
.script sup {
  color: #3a64a8;
  font-size: 7px;
  font-weight: normal;
}

.effect {
  color: #8cbcf0;
  font-family: 'Liberation Sans', sans-serif;
  font-size: 19px;
  font-weight: bold;
  -webkit-text-stroke: 1px #5a94d8;
}

.mark {
  padding: 0 1px;
  border-bottom: 5px solid #ffee00;
  font-size: 11px;
  line-height: 11px;
}

.color-a {
  border-bottom: 4px solid #e80000;
  color: #1c3c80;
  font-family: 'Liberation Sans', sans-serif;
  font-size: 15px;
  font-weight: bold;
  line-height: 15px;
}

.ar {
  margin-left: 1px;
}

.para-mark {
  color: #1c3060;
  font-size: 10px;
  font-weight: bold;
}

.sort {
  color: #333;
  font-size: 14px;
}

.sort span {
  color: #2a50a0;
  font-size: 9px;
  font-weight: bold;
  line-height: 9px;
}

.pilcrow {
  color: #222;
  font-size: 16px;
}

.styles-body {
  display: flex;
  padding-top: 6px;
}

.gallery {
  width: 377px;
  height: 60px;
  display: flex;
  border: 1px solid #c8ccd2;
  border-radius: 3px;
  background: #fff;
}

.gstyle {
  height: 58px;
  padding-top: 10px;
  display: flex;
  flex-direction: column;
  align-items: center;
  overflow: hidden;
  color: #222;
}

.gstyle-normal {
  width: 72px;
  border-radius: 3px;
  box-shadow: inset 0 0 0 2px #f5c64e;
}

.gstyle-nospace {
  width: 67px;
}

.gstyle-h1 {
  width: 75px;
}

.gstyle-h2 {
  width: 73px;
}

.gstyle-title {
  width: 75px;
}

.gs-sample {
  height: 27px;
  font-family: Lato, sans-serif;
  font-size: 13.5px;
  line-height: 24px;
  white-space: nowrap;
}

.gs-h1,
.gs-h2 {
  font-family: 'Liberation Serif', serif;
  font-weight: bold;
  font-size: 16.5px;
}

.gs-h1 {
  color: #366091;
}

.gs-h2 {
  width: 58px;
  display: flex;
  justify-content: flex-end;
  overflow: hidden;
  color: #4f81bd;
  font-size: 15px;
}

.gs-title {
  margin-top: -9px;
  height: 36px;
  color: #17365d;
  font-family: 'Liberation Serif', serif;
  font-size: 33px;
  line-height: 36px;
}

.gs-name {
  color: #444;
  font-size: 11px;
  line-height: 16px;
  white-space: nowrap;
}

.gallery-scroll {
  flex: 1;
  display: flex;
  flex-direction: column;
  border-left: 1px solid #d8dbdf;
  background: #f3f4f6;
}

.gallery-scroll span {
  flex: 1;
  display: flex;
  align-items: center;
  justify-content: center;
  border-bottom: 1px solid #d8dbdf;
}

.change-styles {
  width: 46px;
  margin-left: 2px;
  padding-top: 1px;
  display: flex;
  flex-direction: column;
  align-items: center;
  color: #333;
  font-size: 11.5px;
  line-height: 13px;
}

.cs-letters {
  height: 35px;
  display: flex;
  font-family: 'Liberation Sans', sans-serif;
  font-weight: bold;
  font-size: 26px;
  line-height: 32px;
}

.cs-a {
  margin-right: -8px;
  color: #b04cb8;
  line-height: 26px;
}

.cs-b {
  color: #5a90d8;
  line-height: 36px;
}

.edit-list {
  margin-left: 8px;
  padding-top: 3px;
}

.replace-ic {
  width: 16px;
  display: flex;
  flex-direction: column;
  color: #667;
  font-size: 7.5px;
  line-height: 7px;
}

.ac {
  color: #2a9040;
  align-self: flex-end;
}

.word-main {
  height: 867px;
  display: flex;
}

.nav-pane {
  width: 206px;
  padding: 7px 3px 4px 3px;
  flex: none;
  display: flex;
  flex-direction: column;
  border-right: 1px solid #aeb2b8;
  background: #e9edf2;
}

.nav-head {
  height: 17px;
  padding: 0 3px;
  display: flex;
  align-items: center;
  gap: 10px;
  background: #c9d2dc;
  color: #333;
  font-size: 12px;
}

.nav-head span {
  margin-right: auto;
}

.nav-search {
  height: 21px;
  margin: 7px 6px 0;
  padding: 0 5px 0 2px;
  display: flex;
  align-items: center;
  gap: 7px;
  border: 1px solid #c8ccd2;
  background: #fff;
  color: #666;
  font-size: 11px;
}

.nav-search span {
  margin-right: auto;
}

.nav-tabs {
  height: 25px;
  margin: 9px 6px 0;
  display: flex;
  position: relative;
}

.nav-tab {
  width: 26px;
  display: flex;
  align-items: center;
  justify-content: center;
  border: 1px solid #b8bcc2;
  border-left: 0;
  border-bottom: 0;
  background: #f0f2f5;
}

.nav-tab-on {
  border-left: 1px solid #b8bcc2;
  background: #fff;
}

.nav-up {
  margin: 7px 0 0 73px;
}

.nav-down {
  margin: 7px 0 0 12px;
}

.nav-body {
  flex: 1;
  margin: 0 6px;
  padding: 21px 0 0 20px;
  border: 1px solid #c0c4ca;
  border-top-color: #b8bcc2;
  background: #fff;
  color: #555;
  font-size: 10.5px;
  line-height: 13px;
}

.nav-body p {
  margin: 0 0 13px;
}

.doc-area {
  flex: 1;
  padding: 7px 0 0 93px;
  overflow: hidden;
  background: linear-gradient(to bottom, #c8ccd1, #b8bbbf);
}

.doc-page {
  width: 876px;
  height: 829px;
  padding: 20.500px 0 0 134px;
  background: #fff;
  box-shadow: 0 0 9px rgba(40, 44, 48, 0.6);
  color: #111;
  font-family: Lato, sans-serif;
  font-size: 16px;
  letter-spacing: 0.23px;
  line-height: 24.5px;
  white-space: nowrap;
}

.doc-next {
  height: 40px;
  margin-top: 16px;
}

.doc-p {
  margin: 0;
}

.doc-page u {
  text-decoration: underline wavy #e02020 1px;
  text-underline-offset: 2px;
}

.doc-waiter {
  margin-top: 38px;
}

.doc-when {
  margin-top: 41px;
}

.doc-emp {
  margin-top: 55px;
}

.doc-search {
  margin-top: 16px;
  line-height: 21.6px;
}

.doc-list {
  margin: 0;
  padding: 0;
  list-style: none;
}

.doc-list li {
  position: relative;
  padding-left: 79px;
}

.doc-list li::before {
  content: "-";
  position: absolute;
  left: 55px;
}

.doc-handle {
  margin-top: 17px;
}

.doc-emp-list {
  margin-top: 16px;
}

.doc-emp-list li {
  height: 25px;
}

.doc-scroll {
  width: 18px;
  flex: none;
  position: relative;
  display: flex;
  flex-direction: column;
  border-left: 1px solid #d0d4da;
  background: #dfe3ea;
}

.ruler-ic {
  margin: 7px 0 0 2px;
}

.doc-thumb {
  position: absolute;
  left: 0;
  top: 621px;
  width: 16px;
  height: 73px;
  display: flex;
  align-items: center;
  justify-content: center;
  border: 1px solid #8f98a6;
  border-radius: 2px;
  background: #eef1f5;
}

.doc-scroll-nav {
  margin-top: auto;
  padding-bottom: 1px;
  display: flex;
  flex-direction: column;
}

.doc-scroll-nav span {
  height: 17px;
  display: flex;
  align-items: center;
  justify-content: center;
}

.doc-scroll-nav span:first-child {
  border-bottom: 1px solid #c8ccd2;
}

.word-status {
  height: 23px;
  padding-left: 8px;
  display: flex;
  align-items: center;
  border-top: 1px solid #8f949a;
  background: linear-gradient(to bottom, #e8ebee, #b9bdc2);
  color: #444;
  font-size: 11px;
}

.st-cell {
  height: 22px;
  display: flex;
  align-items: center;
  border-right: 1px solid #a0a4aa;
  box-shadow: 1px 0 0 #eef0f2;
}

.st-page {
  width: 69px;
}

.st-words {
  width: 86px;
  padding-left: 10px;
}

.st-lang {
  width: 118px;
  padding-left: 9px;
  gap: 16px;
}

.st-views {
  height: 22px;
  margin-left: auto;
  padding-left: 4px;
  display: flex;
  align-items: center;
  border-left: 1px solid #a0a4aa;
  box-shadow: inset 1px 0 0 #eef0f2;
}

.view-btn {
  width: 18px;
  height: 20px;
  display: flex;
  align-items: center;
  justify-content: center;
}

.view-on {
  margin-right: 1px;
  border: 1px solid #c9a23f;
  border-radius: 3px;
  background: linear-gradient(to bottom, #fde99a, #fbd768);
}

.st-zoom {
  width: 42px;
  margin-left: 3px;
  text-align: center;
  font-size: 12px;
}

.zoom-circle {
  width: 16px;
  height: 16px;
  margin-left: 4px;
  border: 1px solid #8b8f96;
  border-radius: 50%;
  background: linear-gradient(to bottom, #fff, #dcdfe3);
  color: #444;
  font-size: 14px;
  font-weight: bold;
  line-height: 13px;
  text-align: center;
}

.slider {
  width: 100px;
  height: 1px;
  position: relative;
  background: #9ca0a6;
}

.slider-knob {
  position: absolute;
  left: 47px;
  top: -7px;
  width: 9px;
  height: 13px;
  border: 1px solid #70747a;
  border-radius: 1px 1px 4px 4px;
  background: #fff;
}

.svg-ppt {
  fill: #d04a1c;
  font: bold 19px 'Liberation Sans', sans-serif;
}

.svg-word {
  fill: #1c50a8;
  font: bold 19px 'Liberation Sans', sans-serif;
}

.svg-tiny {
  fill: #334;
  font: 6px 'Liberation Sans', sans-serif;
}
```
